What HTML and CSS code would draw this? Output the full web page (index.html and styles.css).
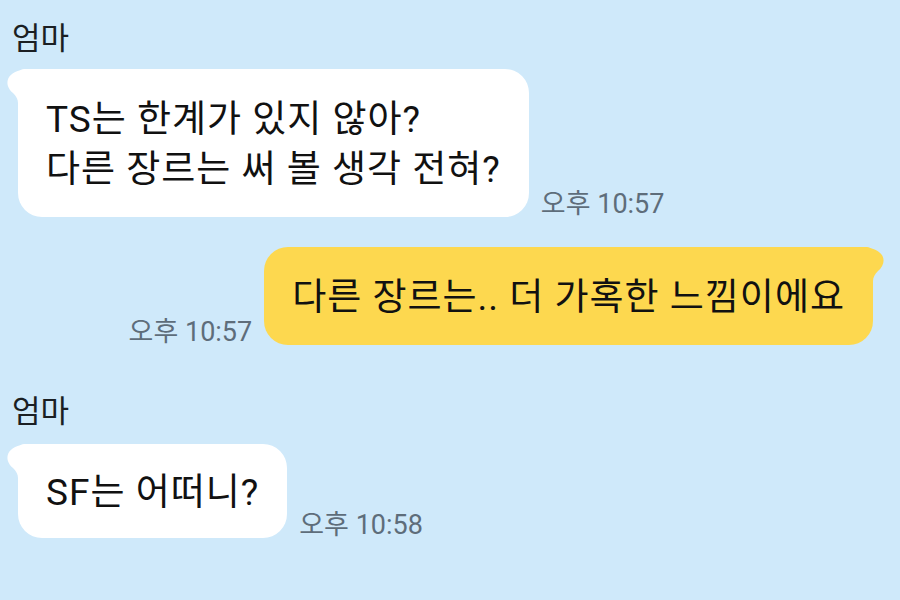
FILE: index.html
```html
<!DOCTYPE html>
<html lang="ko">
	<head>
		<meta charset="UTF-8" />
		<title>엄마</title>
		<link rel="stylesheet" href="styles.css">
	</head>
	<body>
		<div class="chat">
			<div class="name">엄마</div>
			<div class="row">
				<div class="bubble">
					<svg class="tail" viewBox="0 0 34 34"><path d="M34 0 L20 0.5 C12 1 5 4 2.5 9 C0 14 2 20 7 24 C10 27 12 30 12 34 L34 34 Z" /></svg>
					TS는 한계가 있지 않아?<br />다른 장르는 써 볼 생각 전혀?
				</div>
				<span class="time">오후 10:57</span>
			</div>
			<div class="row mine">
				<span class="time">오후 10:57</span>
				<div class="bubble yellow">
					<svg class="tail" viewBox="0 0 34 34"><path d="M34 0 L20 0.5 C12 1 5 4 2.5 9 C0 14 2 20 7 24 C10 27 12 30 12 34 L34 34 Z" /></svg>
					다른 장르는.. 더 가혹한 느낌이에요
				</div>
			</div>
			<div class="name second">엄마</div>
			<div class="row last">
				<div class="bubble">
					<svg class="tail" viewBox="0 0 34 34"><path d="M34 0 L20 0.5 C12 1 5 4 2.5 9 C0 14 2 20 7 24 C10 27 12 30 12 34 L34 34 Z" /></svg>
					SF는 어떠니?
				</div>
				<span class="time">오후 10:58</span>
			</div>
		</div>
	</body>
</html>
```

FILE: styles.css
```css
html,
body {
	margin: 0;
	height: 100%;
	background-color: #cfe9fa;
	font-family: Roboto, "Noto Sans CJK KR", sans-serif;
}

.chat {
	display: flex;
	flex-direction: column;
	padding: 18px 27px 0 18px;
}

.name {
	font-size: 31px;
	line-height: 42px;
	margin-left: -6px;
	color: #1b1f23;
}

.name.second {
	margin-top: 46px;
}

.row {
	display: flex;
	align-items: flex-end;
	gap: 12px;
	margin-top: 9px;
}

.row.mine {
	justify-content: flex-end;
	margin-top: 30px;
}

.row.last {
	margin-top: 11px;
}

.row.last .bubble {
	padding-top: 24px;
	padding-bottom: 20px;
}

.bubble {
	position: relative;
	background-color: #ffffff;
	border-radius: 24px;
	border-top-left-radius: 6px;
	padding: 26px 28px 22px 28px;
	font-size: 37px;
	line-height: 50px;
	letter-spacing: 1px;
	color: #111111;
}

.bubble.yellow {
	background-color: #fdd84f;
	border-top-left-radius: 24px;
	border-top-right-radius: 6px;
}

.tail {
	position: absolute;
	left: -12px;
	top: 0;
	width: 34px;
	height: 34px;
	fill: #ffffff;
}

.yellow .tail {
	left: auto;
	right: -12px;
	transform: scaleX(-1);
	fill: #fdd84f;
}

.time {
	font-size: 27px;
	line-height: 26px;
	color: #5e6d7a;
	white-space: nowrap;
}
```
